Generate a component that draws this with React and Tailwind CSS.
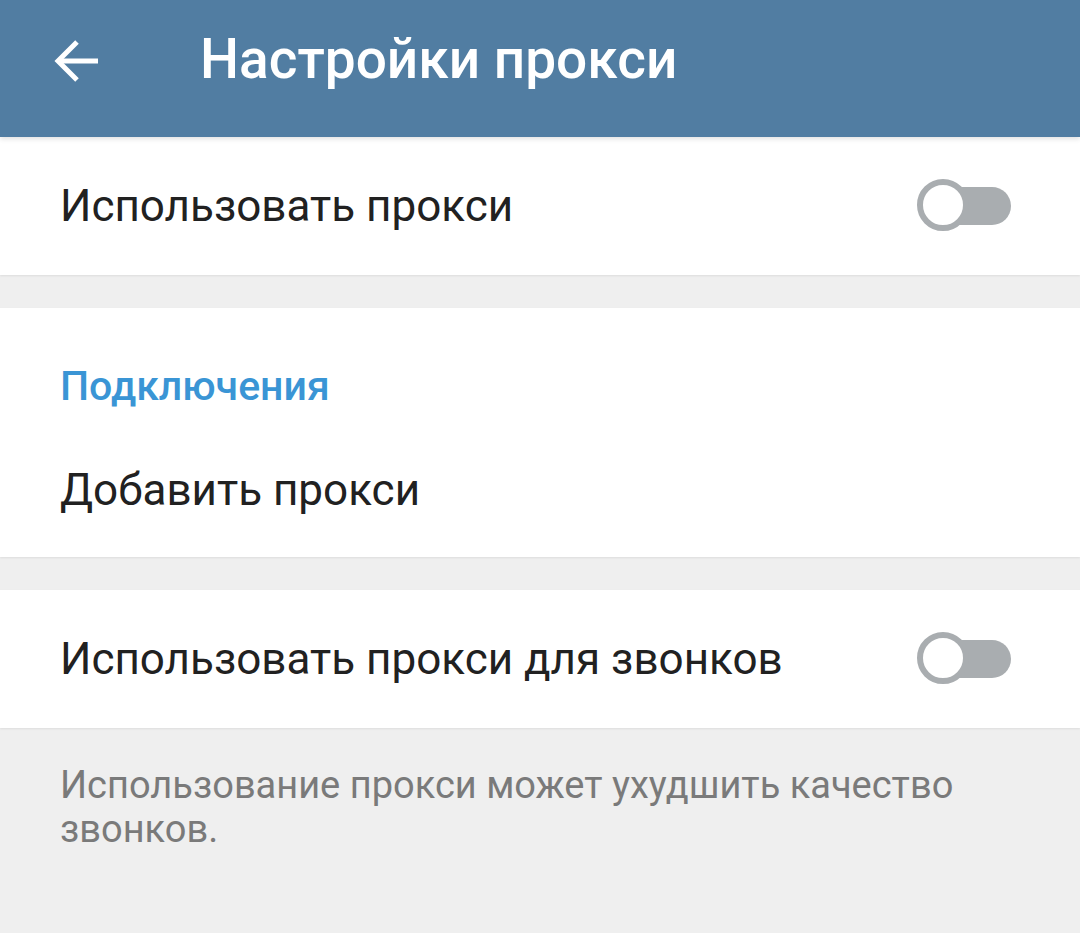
function BackArrow() {
    return (
        <svg width="46" height="46" viewBox="0 0 46 46" fill="none" stroke="white" strokeWidth="5" strokeLinecap="butt" strokeLinejoin="miter">
            <path d="M45 23 H6" />
            <path d="M24 4 L5 23 L24 42" />
        </svg>
    )
}

function Toggle() {
    return (
        <div className="relative w-[96px] h-[56px] flex items-center">
            <div className="ml-[22px] w-[72px] h-[38px] rounded-full bg-[#a9adb0]" />
            <div className="absolute left-0 top-[1px] w-[52px] h-[52px] rounded-full bg-white border-[6px] border-[#a9adb0]" />
        </div>
    )
}

function Row({ label, toggle }) {
    return (
        <div className="h-[138px] flex items-center justify-between pl-[60px] pr-[67px]">
            <span className="text-[44px] text-[#212121] leading-none">{label}</span>
            {toggle && <Toggle />}
        </div>
    )
}

export default function App() {
    return (
        <div className="w-[1080px] h-[933px] bg-[#efefef] overflow-hidden" style={{ fontFamily: 'Roboto, "Noto Sans", sans-serif' }}>
            <div className="relative z-10 h-[137px] bg-[#517da2] flex items-center shadow-[0_2px_5px_rgba(0,0,0,0.12)]">
                <div className="w-[200px] pl-[53px] flex items-center -mt-[15px]">
                    <BackArrow />
                </div>
                <span className="text-[55px] font-medium text-white leading-none -mt-[18px]">Настройки прокси</span>
            </div>

            <div className="bg-white shadow-[0_1px_2px_rgba(0,0,0,0.08)]">
                <Row label="Использовать прокси" toggle />
            </div>

            <div className="h-[33px]" />

            <div className="bg-white h-[249px] flex flex-col pl-[60px] pt-[58px] shadow-[0_1px_2px_rgba(0,0,0,0.08)]">
                <span className="text-[41px] font-medium text-[#3a95d5] leading-none">Подключения</span>
                <span className="mt-[61px] text-[44px] text-[#212121] leading-none">Добавить прокси</span>
            </div>

            <div className="h-[33px]" />

            <div className="bg-white shadow-[0_1px_2px_rgba(0,0,0,0.08)]">
                <Row label="Использовать прокси для звонков" toggle />
            </div>

            <div className="pl-[60px] pr-[60px] pt-[35px] text-[38px] leading-[44px] text-[#7a7a7a]">
                Использование прокси может ухудшить качество звонков.
            </div>
        </div>
    )
}
